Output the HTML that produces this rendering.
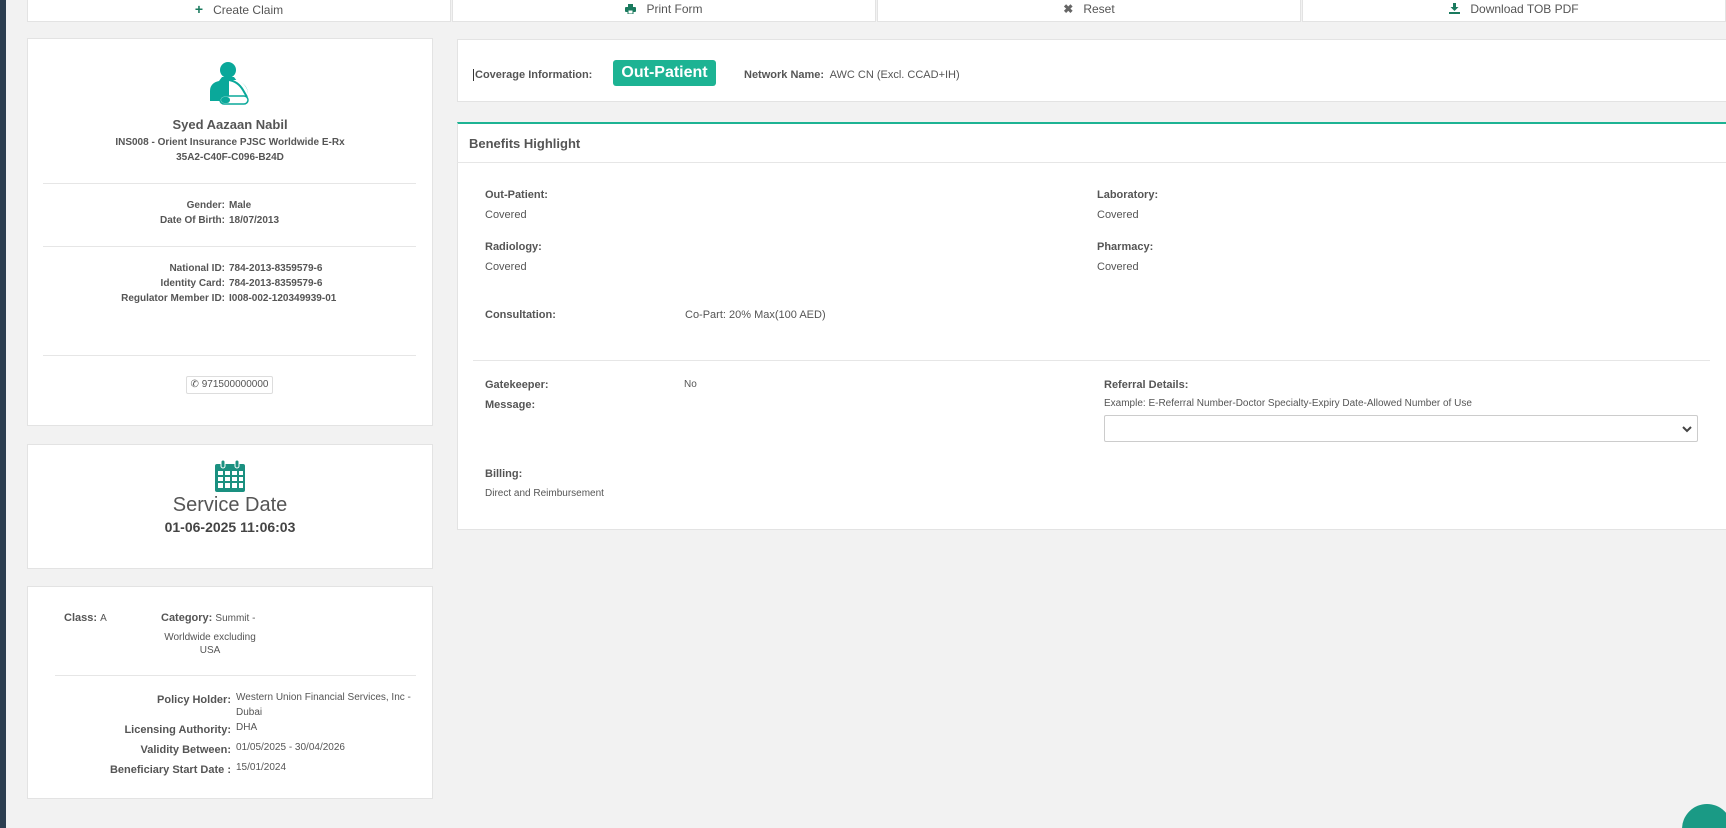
<!DOCTYPE html>
<html style="overflow:hidden;width:1726px;height:828px"><head><meta charset="utf-8"><style>
*{box-sizing:border-box;margin:0;padding:0}
body{width:1726px;height:828px;overflow:hidden;background:#f2f2f2;font-family:"Liberation Sans",Arial,sans-serif;color:#555;position:relative}
.a{position:absolute;white-space:nowrap}
.card{position:absolute;background:#fff;border:1px solid #e3e3e3}
.btn{position:absolute;top:0;height:22px;background:#fff;border:1px solid #e3e3e3;border-top:none;font-size:12px;color:#555;text-align:center;line-height:18px}
.hr{position:absolute;height:1px;background:#e6e6e6}
.b{font-weight:bold}
.c{text-align:center}
.r{text-align:right}
.lbl{font-size:11px;font-weight:bold;color:#555}
.val{font-size:11px;color:#555}
</style></head><body>
<div class="a" style="left:0;top:0;width:6px;height:828px;background:#2c3e50"></div>

<div class="btn" style="left:27px;width:424px"><span style="color:#1a7a5e;font-weight:bold;font-size:14px">+</span>&nbsp;&nbsp; Create Claim</div>
<div class="btn" style="left:452px;width:424px"><svg width="11" height="10" viewBox="0 0 11 10" style="vertical-align:-1px"><rect x="3" y="0" width="5" height="3" fill="#1a7a5e"/><rect x="0" y="3" width="11" height="5" rx="1" fill="#1a7a5e"/><rect x="3" y="6" width="5" height="4" fill="#fff" stroke="#1a7a5e"/></svg>&nbsp;&nbsp; Print Form</div>
<div class="btn" style="left:877px;width:424px"><span style="color:#666;font-weight:bold">✖</span>&nbsp;&nbsp; Reset</div>
<div class="btn" style="left:1302px;width:424px"><svg width="11" height="11" viewBox="0 0 11 11" style="vertical-align:-1px"><path d="M4 0h3v4h2.5L5.5 8 1.5 4H4z" fill="#1a7a5e"/><rect x="0" y="9" width="11" height="2" fill="#1a7a5e"/></svg>&nbsp;&nbsp; Download TOB PDF</div>

<!-- card 1 -->
<div class="card" style="left:27px;top:38px;width:406px;height:388px"></div>
<svg class="a" style="left:208px;top:61px" width="42" height="46" viewBox="0 0 42 46"><circle cx="20" cy="9" r="8" fill="#0aa89a"/><path d="M14 16h12l3 4c6 1 11 6 11 13v7H2v-10c0-6 4-9 9-10z" fill="#0aa89a"/><path d="M21 19v21h19v-7c0-6-5-12-11-14z" fill="#fff"/><path d="M21 19c6 1 11 5 14 10l4 7" stroke="#0aa89a" stroke-width="2" fill="none"/><rect x="12" y="35" width="28" height="8" rx="4" fill="#fff" stroke="#0aa89a" stroke-width="1.5"/><rect x="13" y="36" width="9" height="6" rx="3" fill="#0aa89a"/></svg>
<div class="a c b" style="left:27px;width:406px;top:117px;font-size:13px;color:#555">Syed Aazaan Nabil</div>
<div class="a c b" style="left:27px;width:406px;top:137px;font-size:10px;color:#555">INS008 - Orient Insurance PJSC Worldwide E-Rx</div>
<div class="a c b" style="left:27px;width:406px;top:152px;font-size:10px;color:#555">35A2-C40F-C096-B24D</div>
<div class="hr" style="left:43px;width:373px;top:183px"></div>
<div class="a r b" style="left:27px;width:198px;top:200px;font-size:10px">Gender:</div><div class="a b" style="left:229px;top:200px;font-size:10px">Male</div>
<div class="a r b" style="left:27px;width:198px;top:215px;font-size:10px">Date Of Birth:</div><div class="a b" style="left:229px;top:215px;font-size:10px">18/07/2013</div>
<div class="hr" style="left:43px;width:373px;top:246px"></div>
<div class="a r b" style="left:27px;width:198px;top:263px;font-size:10px">National ID:</div><div class="a b" style="left:229px;top:263px;font-size:10px">784-2013-8359579-6</div>
<div class="a r b" style="left:27px;width:198px;top:278px;font-size:10px">Identity Card:</div><div class="a b" style="left:229px;top:278px;font-size:10px">784-2013-8359579-6</div>
<div class="a r b" style="left:27px;width:198px;top:293px;font-size:10px">Regulator Member ID:</div><div class="a b" style="left:229px;top:293px;font-size:10px">I008-002-120349939-01</div>
<div class="hr" style="left:43px;width:373px;top:355px"></div>
<div class="a" style="left:186px;top:376px;width:87px;height:18px;border:1px solid #ddd;border-radius:2px;font-size:10px;line-height:16px;text-align:center">✆ 971500000000</div>

<!-- card 2 -->
<div class="card" style="left:27px;top:444px;width:406px;height:125px"></div>
<svg class="a" style="left:215px;top:460px" width="30" height="32" viewBox="0 0 30 32"><rect x="0" y="4" width="30" height="28" rx="2" fill="#1a9080"/><rect x="6" y="0" width="4" height="8" rx="2" fill="#1a9080" stroke="#fff"/><rect x="20" y="0" width="4" height="8" rx="2" fill="#1a9080" stroke="#fff"/><g fill="#fff"><rect x="3" y="11" width="5" height="4"/><rect x="10" y="11" width="5" height="4"/><rect x="17" y="11" width="5" height="4"/><rect x="24" y="11" width="4" height="4"/><rect x="3" y="17" width="5" height="4"/><rect x="10" y="17" width="5" height="4"/><rect x="17" y="17" width="5" height="4"/><rect x="24" y="17" width="4" height="4"/><rect x="3" y="23" width="5" height="5"/><rect x="10" y="23" width="5" height="5"/><rect x="17" y="23" width="5" height="5"/><rect x="24" y="23" width="4" height="5"/></g></svg>
<div class="a c" style="left:27px;width:406px;top:494px;font-size:20px;color:#555">Service Date</div>
<div class="a c b" style="left:27px;width:406px;top:519px;font-size:14px;color:#444">01-06-2025 11:06:03</div>

<!-- card 3 -->
<div class="card" style="left:27px;top:586px;width:406px;height:213px"></div>
<div class="a" style="left:64px;top:612px;font-size:11px"><b>Class:</b> <span style="font-size:10px">A</span></div>
<div class="a" style="left:161px;top:612px;font-size:11px"><b>Category:</b> <span style="font-size:10px">Summit -</span></div>
<div class="a c" style="left:150px;width:120px;top:632px;font-size:10px">Worldwide excluding</div>
<div class="a c" style="left:150px;width:120px;top:645px;font-size:10px">USA</div>
<div class="hr" style="left:55px;width:361px;top:675px"></div>
<div class="a r b" style="left:27px;width:204px;top:694px;font-size:11px">Policy Holder:</div><div class="a" style="left:236px;top:692px;font-size:10px">Western Union Financial Services, Inc -</div>
<div class="a" style="left:236px;top:707px;font-size:10px">Dubai</div>
<div class="a r b" style="left:27px;width:204px;top:724px;font-size:11px">Licensing Authority:</div><div class="a" style="left:236px;top:722px;font-size:10px">DHA</div>
<div class="a r b" style="left:27px;width:204px;top:744px;font-size:11px">Validity Between:</div><div class="a" style="left:236px;top:742px;font-size:10px">01/05/2025 - 30/04/2026</div>
<div class="a r b" style="left:27px;width:204px;top:764px;font-size:11px">Beneficiary Start Date :</div><div class="a" style="left:236px;top:762px;font-size:10px">15/01/2024</div>

<!-- coverage -->
<div class="card" style="left:457px;top:39px;width:1269px;height:63px;border-right:none"></div>
<div class="a lbl" style="left:473px;top:69px;border-left:1px solid #333;padding-left:1px">Coverage Information:</div>
<div class="a b" style="left:613px;top:60px;width:103px;height:26px;background:#1db393;border-radius:3px;color:#fff;font-size:16px;text-align:center;line-height:25px">Out-Patient</div>
<div class="a" style="left:744px;top:69px;font-size:11px"><b>Network Name:</b>&nbsp; AWC CN (Excl. CCAD+IH)</div>

<!-- benefits -->
<div class="card" style="left:457px;top:122px;width:1269px;height:408px;border-top:2px solid #1db393;border-right:none"></div>
<div class="a b" style="left:469px;top:136px;font-size:13px;color:#555">Benefits Highlight</div>
<div class="hr" style="left:457px;width:1269px;top:162px"></div>
<div class="a lbl" style="left:485px;top:189px">Out-Patient:</div><div class="a val" style="left:485px;top:209px">Covered</div>
<div class="a lbl" style="left:485px;top:241px">Radiology:</div><div class="a val" style="left:485px;top:261px">Covered</div>
<div class="a lbl" style="left:1097px;top:189px">Laboratory:</div><div class="a val" style="left:1097px;top:209px">Covered</div>
<div class="a lbl" style="left:1097px;top:241px">Pharmacy:</div><div class="a val" style="left:1097px;top:261px">Covered</div>
<div class="a lbl" style="left:485px;top:309px">Consultation:</div><div class="a val" style="left:685px;top:309px">Co-Part: 20% Max(100 AED)</div>
<div class="hr" style="left:473px;width:1237px;top:360px"></div>
<div class="a lbl" style="left:485px;top:379px">Gatekeeper:</div><div class="a val" style="left:684px;top:379px;font-size:10px">No</div>
<div class="a lbl" style="left:485px;top:399px">Message:</div>
<div class="a lbl" style="left:1104px;top:379px">Referral Details:</div>
<div class="a val" style="left:1104px;top:398px;font-size:10px">Example: E-Referral Number-Doctor Specialty-Expiry Date-Allowed Number of Use</div>
<div class="a" style="left:1104px;top:415px;width:594px;height:27px;border:1px solid #ccc;border-radius:2px"><svg style="position:absolute;right:5px;top:9px" width="10" height="8" viewBox="0 0 10 8"><path d="M1 2l4 4 4-4" stroke="#444" stroke-width="2" fill="none"/></svg></div>
<div class="a lbl" style="left:485px;top:468px">Billing:</div>
<div class="a val" style="left:485px;top:488px;font-size:10px">Direct and Reimbursement</div>

<div class="a" style="left:1682px;top:804px;width:44px;height:24px;overflow:hidden"><div style="width:50px;height:50px;border-radius:50%;background:#1a9a85"></div></div>
</body></html>
